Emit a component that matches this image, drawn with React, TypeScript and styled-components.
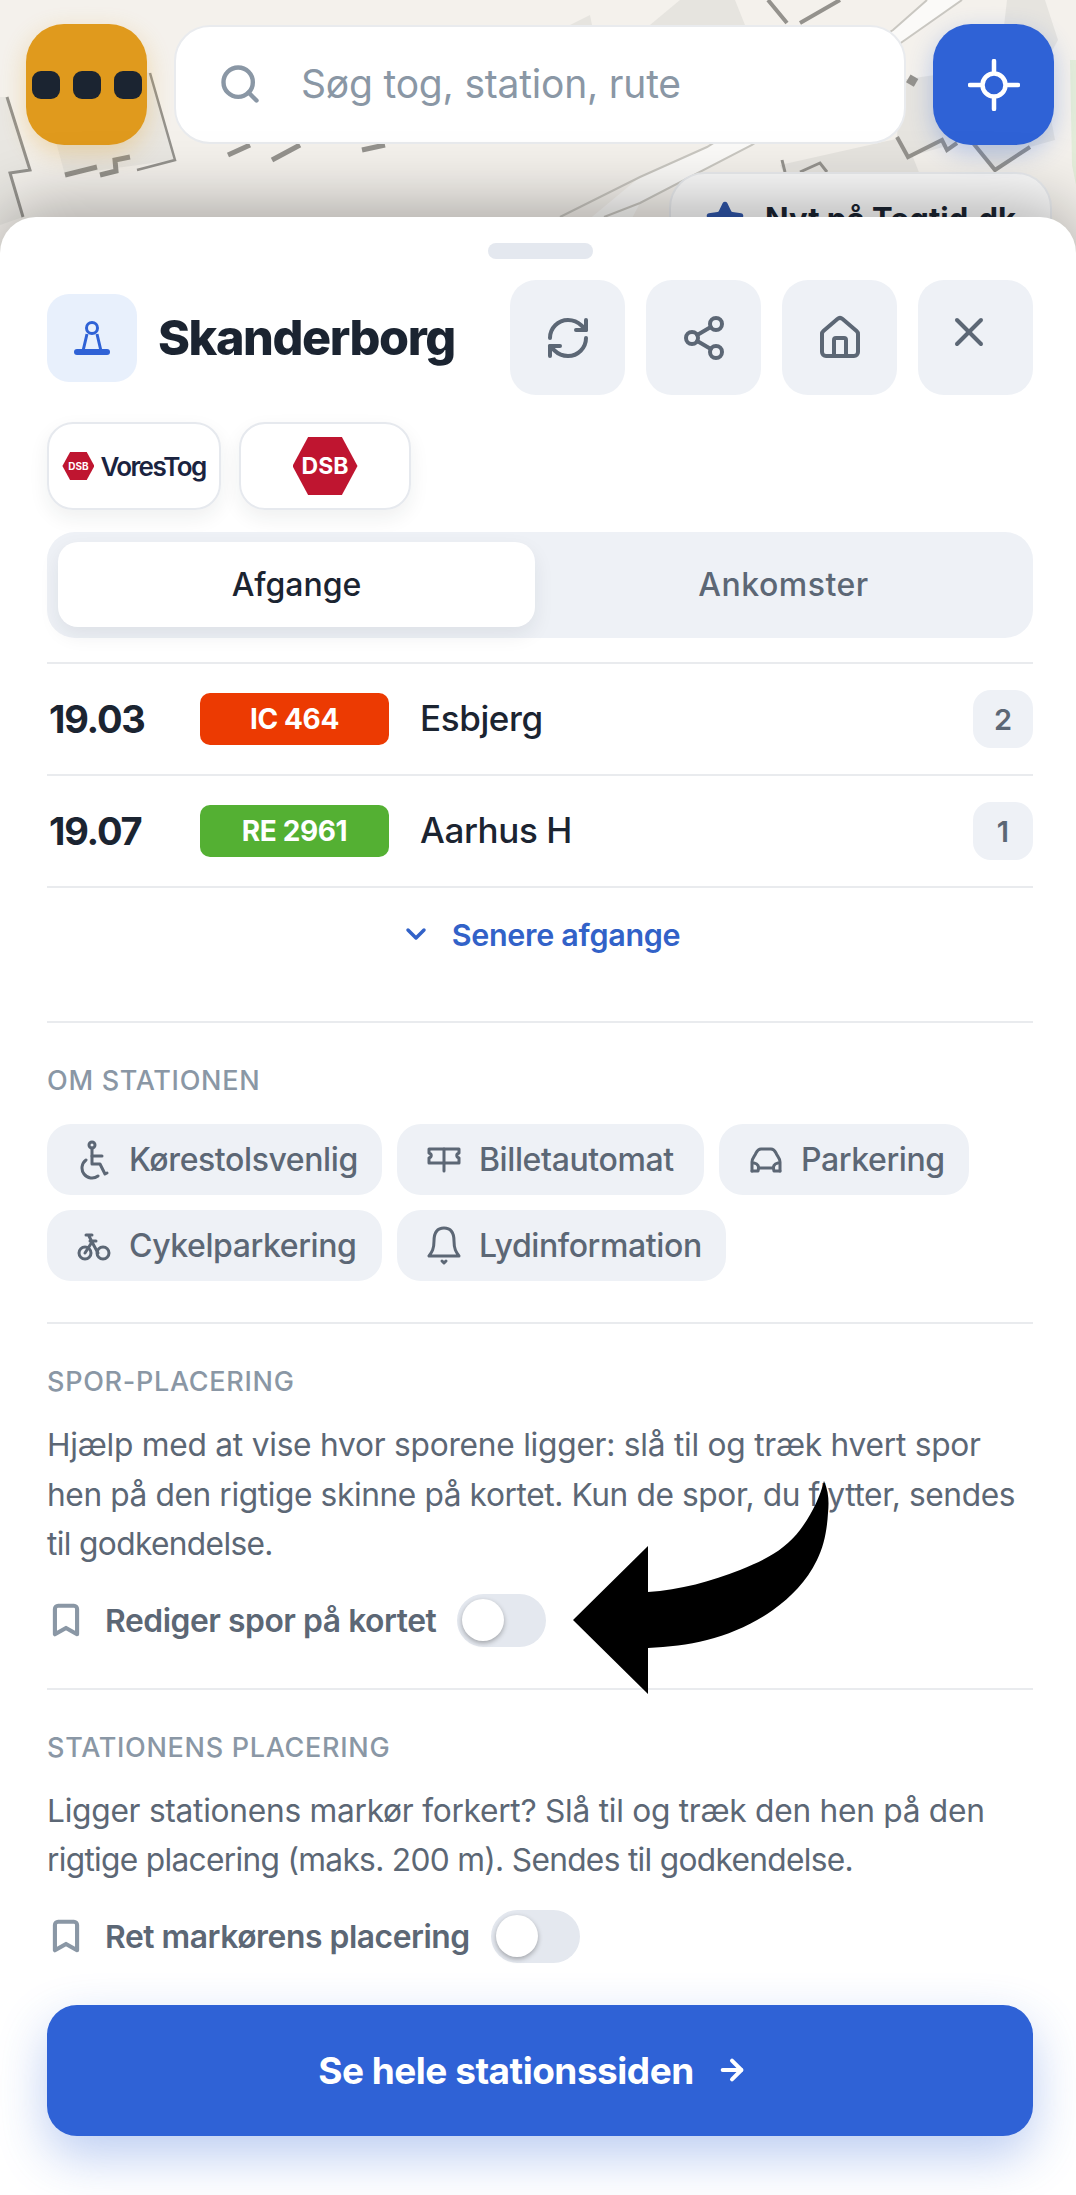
import { ArrowRight, Bookmark, ChevronDown, House, RefreshCw, Search, Share2, Star, X } from 'lucide-react';
import React from 'react';
import styled, { createGlobalStyle } from 'styled-components';

const GlobalStyle = createGlobalStyle`
  html, body {
    margin: 0;
    padding: 0;
    background: #fff;
  }
  * {
    box-sizing: border-box;
  }
  body {
    font-family: Inter, "Noto Sans", sans-serif;
    color: #1b2431;
  }
`;

const Page = styled.div`
  width: 1076px;
  height: 2195px;
  overflow: hidden;
  display: flex;
  flex-direction: column;
`;

const MapArea = styled.div`
  position: relative;
  height: 260px;
  flex: none;
  background: #f4f1ec;
  overflow: hidden;
`;

const MapArt = styled.svg`
  position: absolute;
  inset: 0;
  width: 1076px;
  height: 260px;
`;

const TopBar = styled.div`
  position: relative;
  display: flex;
  align-items: center;
  gap: 27px;
  padding: 24px 22px 0 26px;
`;

const SquareButton = styled.div<{ $bg: string; $glow: string }>`
  width: 121px;
  height: 121px;
  flex: none;
  border-radius: 38px;
  display: flex;
  align-items: center;
  justify-content: center;
  background: ${(p) => p.$bg};
  box-shadow: 0 8px 24px ${(p) => p.$glow};
`;

const Dots = styled.div`
  display: flex;
  gap: 13px;
`;

const Dot = styled.span`
  width: 28px;
  height: 28px;
  border-radius: 9px;
  background: #1b2431;
`;

const SearchBox = styled.div`
  flex: 1;
  height: 119px;
  display: flex;
  align-items: center;
  gap: 39px;
  padding: 0 0 2px 42px;
  background: #fff;
  border: 2px solid #e9ebee;
  border-radius: 36px;
  color: #8a97a5;
  font-size: 39px;
`;

const Placeholder = styled.span`
  letter-spacing: -0.2px;
`;

const NewsCard = styled.div`
  position: absolute;
  top: 172px;
  left: 669px;
  width: 383px;
  height: 90px;
  display: flex;
  align-items: flex-start;
  gap: 20px;
  padding: 26px 0 0 34px;
  background: #fafafa;
  border: 2px solid #e9ebee;
  border-radius: 36px;
  color: #1b2431;
  font-size: 31px;
  font-weight: 700;
  white-space: nowrap;
`;

const Sheet = styled.div`
  position: relative;
  z-index: 2;
  flex: 1;
  margin-top: -43px;
  padding: 26px 43px 0 47px;
  display: flex;
  flex-direction: column;
  background: #fff;
  border-radius: 36px 36px 0 0;
  box-shadow: 0 -8px 70px rgba(0, 0, 0, 0.34);
`;

const Handle = styled.div`
  width: 105px;
  height: 16px;
  flex: none;
  align-self: center;
  border-radius: 8px;
  background: #e4e8ef;
`;

const Header = styled.div`
  display: flex;
  align-items: center;
  margin-top: 21px;
  height: 115px;
`;

const StationBadge = styled.div`
  width: 90px;
  height: 88px;
  flex: none;
  border-radius: 22px;
  background: #e8f0fc;
  display: flex;
  align-items: center;
  justify-content: center;
`;

const Title = styled.h1`
  flex: 1;
  margin: 0 0 0 21px;
  font-size: 48.5px;
  font-weight: 800;
  letter-spacing: -1.4px;
`;

const Actions = styled.div`
  display: flex;
  gap: 21px;
`;

const ActionButton = styled.div`
  width: 115px;
  height: 115px;
  border-radius: 26px;
  background: #eef1f6;
  color: #5c6775;
  display: flex;
  align-items: center;
  justify-content: center;
`;

const CloseIcon = styled(X)`
  margin: 0 14px 12px 0;
`;

const Operators = styled.div`
  display: flex;
  gap: 18px;
  margin-top: 27px;
`;

const OperatorCard = styled.div<{ $w: number }>`
  width: ${(p) => p.$w}px;
  height: 88px;
  display: flex;
  align-items: center;
  justify-content: center;
  gap: 6px;
  border: 2px solid #e6e9ee;
  border-radius: 26px;
  box-shadow: 0 8px 20px rgba(27, 36, 49, 0.07);
`;

const Hexagon = styled.div<{ $w: number; $h: number; $size: number }>`
  width: ${(p) => p.$w}px;
  height: ${(p) => p.$h}px;
  display: flex;
  align-items: center;
  justify-content: center;
  background: #bf1530;
  color: #fff;
  font-size: ${(p) => p.$size}px;
  font-weight: 700;
  clip-path: polygon(24% 0, 76% 0, 100% 50%, 76% 100%, 24% 100%, 0 50%);
`;

const VoresTog = styled.span`
  color: #1a2340;
  font-size: 26px;
  font-weight: 600;
  letter-spacing: -1.6px;
`;

const Tabs = styled.div`
  display: flex;
  height: 106px;
  margin-top: 22px;
  padding: 10px 11px 11px;
  border-radius: 28px;
  background: #eef1f6;
`;

const Tab = styled.div<{ $active?: boolean }>`
  flex: ${(p) => (p.$active ? '0 0 477px' : '1')};
  display: flex;
  align-items: center;
  justify-content: center;
  padding-left: ${(p) => (p.$active ? 0 : 10)}px;
  border-radius: 20px;
  font-size: 32px;
  font-weight: 500;
  letter-spacing: ${(p) => (p.$active ? 0 : 0.5)}px;
  color: ${(p) => (p.$active ? '#1b2431' : '#5c6775')};
  background: ${(p) => (p.$active ? '#fff' : 'transparent')};
  box-shadow: ${(p) => (p.$active ? '0 8px 20px rgba(27, 36, 49, 0.08)' : 'none')};
`;

const Departures = styled.div`
  margin-top: 24px;
  border-top: 2px solid #e9ebee;
`;

const Row = styled.div`
  height: 112px;
  display: flex;
  align-items: center;
  border-bottom: 2px solid #e9ebee;
`;

const Time = styled.span`
  width: 153px;
  padding-left: 2px;
  font-size: 38px;
  font-weight: 700;
  letter-spacing: -1.2px;
`;

const TrainBadge = styled.span<{ $bg: string }>`
  width: 189px;
  height: 52px;
  display: flex;
  align-items: center;
  justify-content: center;
  border-radius: 10px;
  background: ${(p) => p.$bg};
  color: #fff;
  font-size: 28px;
  font-weight: 700;
  letter-spacing: -0.4px;
`;

const Destination = styled.span`
  flex: 1;
  margin-left: 31px;
  padding-bottom: 2px;
  font-size: 35px;
  font-weight: 500;
  letter-spacing: -0.4px;
`;

const Platform = styled.span`
  width: 60px;
  height: 58px;
  display: flex;
  align-items: center;
  justify-content: center;
  border-radius: 18px;
  background: #eef1f6;
  color: #5c6775;
  font-size: 29px;
  font-weight: 600;
`;

const LaterButton = styled.div`
  height: 92px;
  display: flex;
  align-items: center;
  justify-content: center;
  gap: 20px;
  color: #3262c8;
  font-size: 30.5px;
  font-weight: 600;
  letter-spacing: -0.3px;
`;

const Section = styled.section<{ $last?: boolean }>`
  padding: 43px 0 ${(p) => (p.$last ? 0 : 41)}px;
  border-top: 2px solid #e9ebee;
`;

const FirstSectionGap = styled.div`
  height: 41px;
`;

const Label = styled.h2`
  margin: 0;
  height: 30px;
  line-height: 30px;
  font-size: 27px;
  font-weight: 500;
  letter-spacing: 0.7px;
  color: #8a97a5;
  text-transform: uppercase;
`;

const Chips = styled.div`
  display: flex;
  flex-wrap: wrap;
  gap: 15px;
  margin-top: 28px;
`;

const Chip = styled.div<{ $w: number }>`
  width: ${(p) => p.$w}px;
  height: 71px;
  display: flex;
  align-items: center;
  gap: 18px;
  padding-left: 30px;
  border-radius: 24px;
  background: #eef1f6;
  color: #5c6775;
  font-size: 32px;
  font-weight: 500;
  letter-spacing: -0.4px;
  white-space: nowrap;
`;

const Paragraph = styled.p`
  margin: 23px 0 0;
  font-size: 31.7px;
  line-height: 49.5px;
  color: #5c6775;
`;

const TextLine = styled.span<{ $tight: number }>`
  display: block;
  white-space: nowrap;
  letter-spacing: ${(p) => p.$tight}px;
`;

const ToggleRow = styled.div`
  display: flex;
  align-items: center;
  height: 53px;
  margin-top: 25px;
  color: #5c6775;
  font-size: 31.8px;
  font-weight: 600;
  letter-spacing: -0.45px;
`;

const ToggleText = styled.span`
  margin: 0 21px 0 20px;
`;

const Track = styled.span`
  width: 89px;
  height: 53px;
  display: flex;
  align-items: center;
  padding-left: 5px;
  border-radius: 27px;
  background: #e4e8ef;
`;

const Knob = styled.span`
  width: 42px;
  height: 42px;
  border-radius: 50%;
  background: #fff;
  box-shadow: 0 2px 5px rgba(0, 0, 0, 0.3);
`;

const PrimaryButton = styled.div`
  height: 131px;
  margin-top: 42px;
  padding-right: 14px;
  display: flex;
  align-items: center;
  justify-content: center;
  gap: 22px;
  border-radius: 30px;
  background: #2f62d6;
  color: #fff;
  font-size: 37px;
  font-weight: 700;
  letter-spacing: -0.5px;
  box-shadow: 0 20px 50px rgba(47, 98, 214, 0.32);
`;

const Annotation = styled.svg`
  position: absolute;
  top: 0;
  left: 0;
  width: 1076px;
  height: 2195px;
  pointer-events: none;
  z-index: 3;
`;

const Walls = () => (
  <g fill="none" stroke="#94928d" strokeWidth="4">
    <path d="M7 97 L30 170 L10 173 L23 217" strokeWidth="3" />
    <path d="M150 73 L175 160 L137 170" strokeWidth="2.5" />
    <path d="M65 175 L97 167 M100 175 L116 171 L115 160 L130 157" strokeWidth="5" />
    <path d="M228 155 L250 145 M272 160 L300 145 M362 150 L385 145" strokeWidth="5" />
    <path d="M768 0 L787 23 M840 0 L800 23" strokeWidth="4" />
    <path d="M897 137 L908 157 L942 140 L947 150 L957 143" />
    <path d="M973 143 L995 170 L1030 147" />
    <path d="M782 160 L785 172 M800 172 L820 163 L827 172" strokeWidth="3" />
  </g>
);

const MapDrawing = () => (
  <MapArt viewBox="0 0 1076 260">
    <path d="M0 97 L7 97 L30 170 L10 173 L23 217 L0 225 Z" fill="#e9e7e2" />
    <path d="M100 60 L150 73 L175 160 L65 175 L50 120 Z" fill="#e9e7e2" />
    <path d="M650 25 L680 0 L735 0 L745 25 Z" fill="#e6e4df" />
    <path d="M570 25 L590 15 L592 25 Z" fill="#e6e4df" />
    <path d="M1007 0 L1045 0 L1058 40 L1047 60 L1000 60 Z" fill="#e6e4df" />
    <path d="M900 80 L1040 60 L1055 140 L1030 147 L995 170 L973 143 L957 143 L908 157 L897 137 Z" fill="#e6e4df" />
    <path d="M780 165 L905 137 L920 175 L800 210 Z" fill="#e6e4df" />
    <path d="M1070 60 L1076 60 L1076 185 L1072 165 Z" fill="#e3ecd9" />
    <path d="M927 0 L962 0 L905 40 L752 145 L640 203 L610 260 L540 260 L640 177 L707 147 L893 30 Z" fill="#fbfaf8" />
    <path d="M927 0 L893 30 L707 147 L640 177 L560 217 M962 0 L905 40 L752 145 L640 203 L604 217" fill="none" stroke="#c9c7c1" strokeWidth="2" />
    <rect x="908" y="76" width="9" height="9" transform="rotate(30 912 80)" fill="#94928d" />
    <Walls />
  </MapArt>
);

const StationIcon = () => (
  <svg width="36" height="36" viewBox="0 0 36 36" fill="none" stroke="#2f62d6">
    <circle cx="18" cy="8" r="5.5" strokeWidth="3" />
    <path d="M13 14 L9 31 M23 14 L27 31" strokeWidth="3" />
    <path d="M3 32 H33" strokeWidth="6" strokeLinecap="round" />
  </svg>
);

const LocateIcon = () => (
  <svg width="52" height="52" viewBox="0 0 52 52" fill="none" stroke="#fff" strokeWidth="4.5" strokeLinecap="round">
    <circle cx="26" cy="26" r="11.5" />
    <path d="M26 2 V12 M26 40 V50 M2 26 H12 M40 26 H50" />
  </svg>
);

const ChipIcon = styled.svg`
  width: 34px;
  height: 40px;
  flex: none;
  fill: none;
  stroke: #5c6775;
  stroke-width: 3;
  stroke-linecap: round;
  stroke-linejoin: round;
`;

const WheelchairIcon = () => (
  <ChipIcon viewBox="0 0 34 40">
    <circle cx="15" cy="5" r="3" />
    <path d="M15 8 V24 H23 L28 34 L30 33" />
    <path d="M15 16 H25" />
    <path d="M9 20 A9.5 9.5 0 1 0 21 36" />
  </ChipIcon>
);

const TicketIcon = () => (
  <ChipIcon viewBox="0 0 34 40">
    <path d="M2 9 H32 V13 C29 14 29 17 32 18 V23 H2 V18 C5 17 5 14 2 13 Z" />
    <path d="M17 9 V31" />
  </ChipIcon>
);

const CarIcon = () => (
  <ChipIcon viewBox="0 0 34 40">
    <path d="M3 31 V22 C3 18 6 16 7 13 C8 11 9 9 12 9 H22 C25 9 26 11 27 13 C28 16 31 18 31 22 V31" />
    <path d="M3 31 H9 Q11 24 5 23 M31 31 H25 Q23 24 29 23 M11 28 H23" />
  </ChipIcon>
);

const BikeIcon = () => (
  <ChipIcon viewBox="0 0 34 40">
    <circle cx="8" cy="27" r="6" />
    <circle cx="26" cy="27" r="6" />
    <path d="M8 27 L15 16 L21 27 M15 16 L12 10 M9 9 H15 M13 15 H19" />
  </ChipIcon>
);

const BellIcon = () => (
  <ChipIcon viewBox="0 0 34 40">
    <path d="M17 2 C9 2 7 8 7 15 C7 23 5 26 2 30 H32 C29 26 27 23 27 15 C27 8 25 2 17 2 Z" />
    <path d="M15 35 L17 37 L19 35" />
  </ChipIcon>
);

const chips = [
  { label: 'Kørestolsvenlig', w: 335, icon: <WheelchairIcon /> },
  { label: 'Billetautomat', w: 307, icon: <TicketIcon /> },
  { label: 'Parkering', w: 250, icon: <CarIcon /> },
  { label: 'Cykelparkering', w: 335, icon: <BikeIcon /> },
  { label: 'Lydinformation', w: 329, icon: <BellIcon /> },
];

function App() {
  return (
    <Page>
      <GlobalStyle />
      <MapArea>
        <MapDrawing />
        <NewsCard>
          <Star size={40} color="#2f55a8" fill="#2f55a8" />
          Nyt på Togtid.dk
        </NewsCard>
        <TopBar>
          <SquareButton $bg="#e09a1d" $glow="rgba(224, 154, 29, 0.3)">
            <Dots>
              <Dot />
              <Dot />
              <Dot />
            </Dots>
          </SquareButton>
          <SearchBox>
            <Search size={44} strokeWidth={2.4} />
            <Placeholder>Søg tog, station, rute</Placeholder>
          </SearchBox>
          <SquareButton $bg="#2f62d6" $glow="rgba(47, 98, 214, 0.3)">
            <LocateIcon />
          </SquareButton>
        </TopBar>
      </MapArea>
      <Sheet>
        <Handle />
        <Header>
          <StationBadge>
            <StationIcon />
          </StationBadge>
          <Title>Skanderborg</Title>
          <Actions>
            <ActionButton>
              <RefreshCw size={48} strokeWidth={2} />
            </ActionButton>
            <ActionButton>
              <Share2 size={48} strokeWidth={2} />
            </ActionButton>
            <ActionButton>
              <House size={48} strokeWidth={2} />
            </ActionButton>
            <ActionButton>
              <CloseIcon size={48} strokeWidth={2} />
            </ActionButton>
          </Actions>
        </Header>
        <Operators>
          <OperatorCard $w={174}>
            <Hexagon $w={32} $h={28} $size={10}>
              DSB
            </Hexagon>
            <VoresTog>VoresTog</VoresTog>
          </OperatorCard>
          <OperatorCard $w={172}>
            <Hexagon $w={65} $h={58} $size={23}>
              DSB
            </Hexagon>
          </OperatorCard>
        </Operators>
        <Tabs>
          <Tab $active>Afgange</Tab>
          <Tab>Ankomster</Tab>
        </Tabs>
        <Departures>
          <Row>
            <Time>19.03</Time>
            <TrainBadge $bg="#ec3a02">IC 464</TrainBadge>
            <Destination>Esbjerg</Destination>
            <Platform>2</Platform>
          </Row>
          <Row>
            <Time>19.07</Time>
            <TrainBadge $bg="#54b033">RE 2961</TrainBadge>
            <Destination>Aarhus H</Destination>
            <Platform>1</Platform>
          </Row>
        </Departures>
        <LaterButton>
          <ChevronDown size={32} strokeWidth={2.6} />
          Senere afgange
        </LaterButton>
        <FirstSectionGap />
        <Section>
          <Label>Om stationen</Label>
          <Chips>
            {chips.map((chip) => (
              <Chip key={chip.label} $w={chip.w}>
                {chip.icon}
                {chip.label}
              </Chip>
            ))}
          </Chips>
        </Section>
        <Section>
          <Label>Spor-placering</Label>
          <Paragraph>
            <TextLine $tight={-0.25}>Hjælp med at vise hvor sporene ligger: slå til og træk hvert spor</TextLine>
            <TextLine $tight={-0.4}>hen på den rigtige skinne på kortet. Kun de spor, du flytter, sendes</TextLine>
            <TextLine $tight={-0.65}>til godkendelse.</TextLine>
          </Paragraph>
          <ToggleRow>
            <Bookmark size={38} color="#8a97a5" strokeWidth={2.6} />
            <ToggleText>Rediger spor på kortet</ToggleText>
            <Track>
              <Knob />
            </Track>
          </ToggleRow>
        </Section>
        <Section $last>
          <Label>Stationens placering</Label>
          <Paragraph>
            <TextLine $tight={-0.27}>Ligger stationens markør forkert? Slå til og træk den hen på den</TextLine>
            <TextLine $tight={-0.7}>rigtige placering (maks. 200 m). Sendes til godkendelse.</TextLine>
          </Paragraph>
          <ToggleRow>
            <Bookmark size={38} color="#8a97a5" strokeWidth={2.6} />
            <ToggleText>Ret markørens placering</ToggleText>
            <Track>
              <Knob />
            </Track>
          </ToggleRow>
        </Section>
        <PrimaryButton>
          Se hele stationssiden
          <ArrowRight size={32} strokeWidth={3} />
        </PrimaryButton>
      </Sheet>
      <Annotation viewBox="0 0 1076 2195">
        <path
          d="M573 1620 L648 1546 L648 1592 C680 1590 712 1581 740 1570 C770 1558 786 1548 800 1530 C812 1514 820 1497 824 1481 C829 1492 829 1503 828 1513 C827 1530 824 1546 817 1560 C806 1582 792 1596 773 1610 C752 1625 730 1634 707 1640 C688 1645 668 1647 648 1648 L648 1694 Z"
          fill="#000"
        />
      </Annotation>
    </Page>
  );
}

export default App;
